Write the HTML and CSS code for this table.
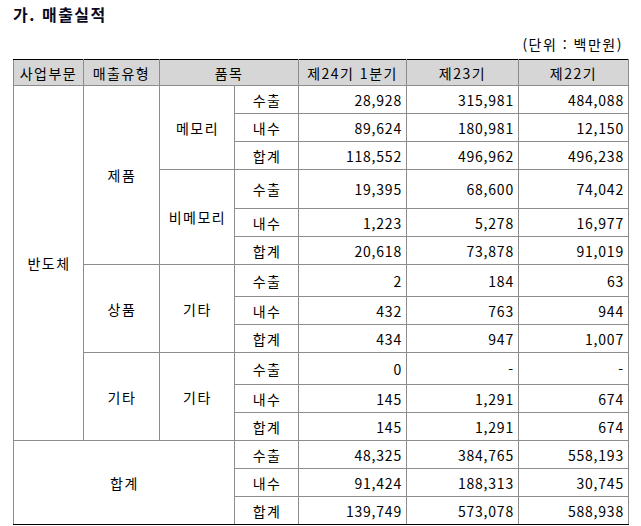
FILE: index.html
```html
<!DOCTYPE html>
<html lang="ko">
<head>
<meta charset="utf-8">
<title>매출실적</title>
<link rel="stylesheet" href="styles.css">
</head>
<body>
<div class="page">
  <h2 class="title">가. 매출실적</h2>
  <p class="unit">(단위 : 백만원)</p>
  <table class="sales">
    <colgroup>
      <col class="c1"><col class="c2"><col class="c3"><col class="c4"><col class="c5"><col class="c6"><col class="c7">
    </colgroup>
    <thead>
      <tr>
        <th>사업부문</th><th>매출유형</th><th colspan="2">품목</th><th>제24기 1분기</th><th>제23기</th><th>제22기</th>
      </tr>
    </thead>
    <tbody>
      <tr>
        <td rowspan="12" class="ctr">반도체</td>
        <td rowspan="6" class="ctr">제품</td>
        <td rowspan="3" class="ctr">메모리</td>
        <td class="ctr">수출</td><td class="num">28,928</td><td class="num">315,981</td><td class="num">484,088</td>
      </tr>
      <tr><td class="ctr">내수</td><td class="num">89,624</td><td class="num">180,981</td><td class="num">12,150</td></tr>
      <tr><td class="ctr">합계</td><td class="num">118,552</td><td class="num">496,962</td><td class="num">496,238</td></tr>
      <tr class="tall">
        <td rowspan="3" class="ctr">비메모리</td>
        <td class="ctr">수출</td><td class="num">19,395</td><td class="num">68,600</td><td class="num">74,042</td>
      </tr>
      <tr><td class="ctr">내수</td><td class="num">1,223</td><td class="num">5,278</td><td class="num">16,977</td></tr>
      <tr><td class="ctr">합계</td><td class="num">20,618</td><td class="num">73,878</td><td class="num">91,019</td></tr>
      <tr class="mid">
        <td rowspan="3" class="ctr">상품</td>
        <td rowspan="3" class="ctr">기타</td>
        <td class="ctr">수출</td><td class="num">2</td><td class="num">184</td><td class="num">63</td>
      </tr>
      <tr><td class="ctr">내수</td><td class="num">432</td><td class="num">763</td><td class="num">944</td></tr>
      <tr><td class="ctr">합계</td><td class="num">434</td><td class="num">947</td><td class="num">1,007</td></tr>
      <tr class="mid">
        <td rowspan="3" class="ctr">기타</td>
        <td rowspan="3" class="ctr">기타</td>
        <td class="ctr">수출</td><td class="num">0</td><td class="num">-</td><td class="num">-</td>
      </tr>
      <tr><td class="ctr">내수</td><td class="num">145</td><td class="num">1,291</td><td class="num">674</td></tr>
      <tr><td class="ctr">합계</td><td class="num">145</td><td class="num">1,291</td><td class="num">674</td></tr>
      <tr>
        <td rowspan="3" colspan="3" class="ctr">합계</td>
        <td class="ctr">수출</td><td class="num">48,325</td><td class="num">384,765</td><td class="num">558,193</td>
      </tr>
      <tr><td class="ctr">내수</td><td class="num">91,424</td><td class="num">188,313</td><td class="num">30,745</td></tr>
      <tr><td class="ctr">합계</td><td class="num">139,749</td><td class="num">573,078</td><td class="num">588,938</td></tr>
    </tbody>
  </table>
</div>
</body>
</html>
```

FILE: styles.css
```css
html, body {
  margin: 0;
  padding: 0;
  background: #ffffff;
}

body {
  font-family: "Noto Sans CJK KR", "Noto Sans", sans-serif;
  color: #000000;
}

.page {
  padding: 4px 14px 0 13px;
}

.title {
  margin: 0;
  font-size: 16px;
  font-weight: bold;
  line-height: 20px;
  letter-spacing: 1.5px;
  color: #0a0a1e;
}

.unit {
  margin: 10px 0 0 0;
  text-align: right;
  font-size: 14px;
  line-height: 20px;
  letter-spacing: 1.5px;
  padding-right: 4px;
}

.sales {
  margin-top: 5px;
  border-collapse: collapse;
  table-layout: fixed;
  width: 615px;
  border: 1px solid #000000;
  font-size: 14px;
  letter-spacing: 0.8px;
}

.c1 { width: 70px; }
.c2 { width: 76px; }
.c3 { width: 75px; }
.c4 { width: 64px; }
.c5 { width: 108px; }
.c6 { width: 112px; }
.c7 { width: 110px; }

.sales th {
  background: #d6d6d6;
  font-weight: normal;
  height: 25px;
  padding: 0;
  border: 1px solid #8c8c8c;
  border-top: 1px solid #000000;
  border-bottom: 1px solid #8c8c8c;
  text-align: center;
  line-height: 16px;
  letter-spacing: 1.5px;
}

.sales td {
  height: 27px;
  padding: 0 4px 0 5px;
  border: 1px solid #8c8c8c;
  line-height: 16px;
  white-space: nowrap;
}

.sales td.ctr {
  letter-spacing: 1.5px;
}

.sales tbody tr:last-child td {
  border-bottom: 1px solid #000000;
}

.sales td[rowspan="3"][colspan="3"] {
  border-bottom: 1px solid #000000;
}

.sales .tall td {
  height: 38px;
}

.sales .mid td {
  height: 31px;
}

.ctr {
  text-align: center;
}

.num {
  text-align: right;
}
```
